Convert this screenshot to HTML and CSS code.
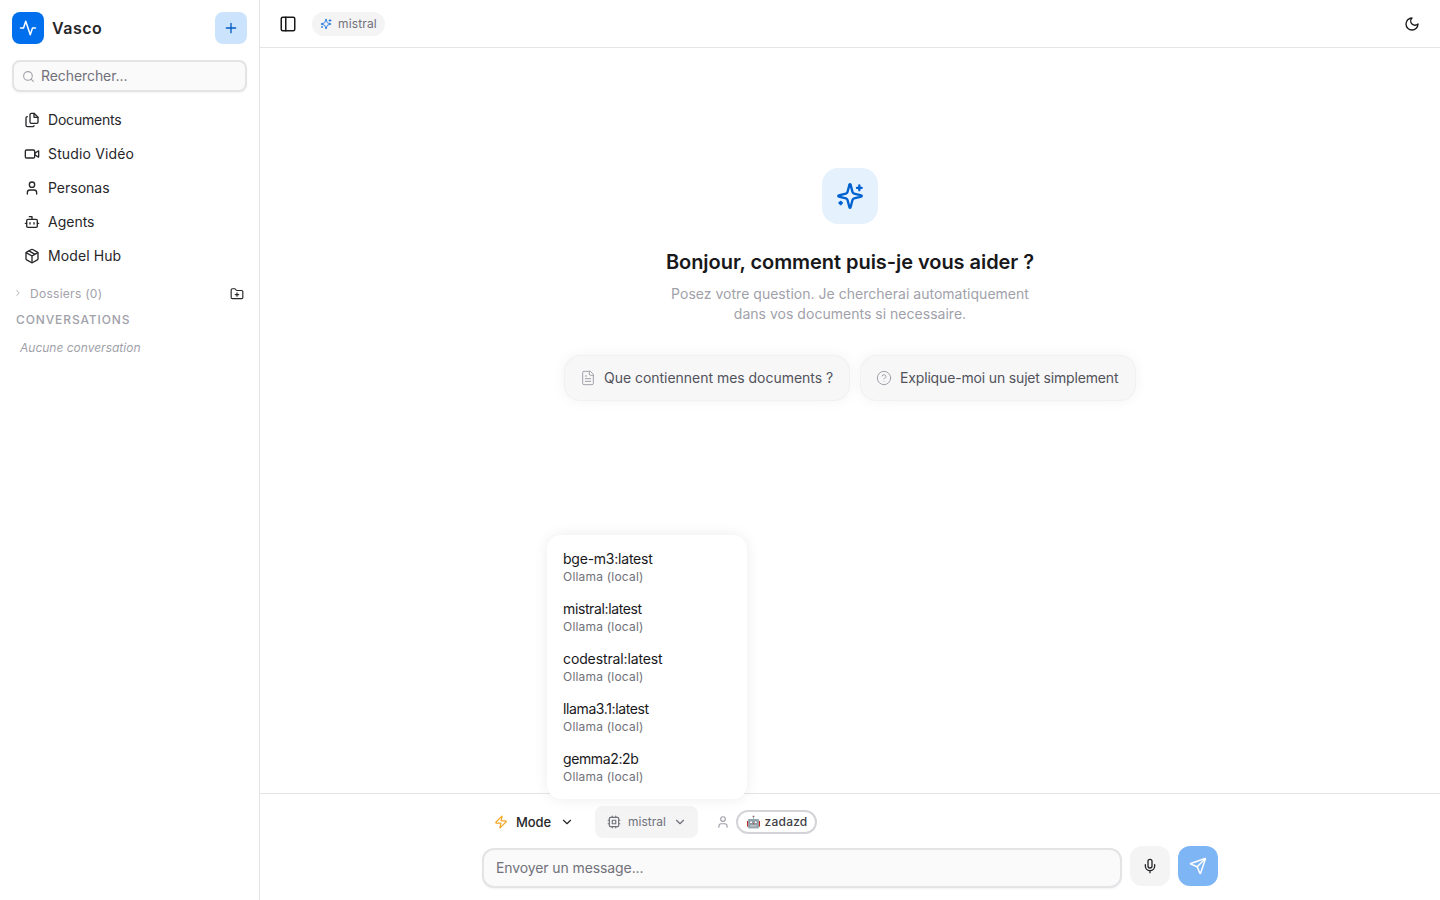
FILE: index.html
```html
<!DOCTYPE html>
<html lang="fr">
<head>
<meta charset="utf-8">
<title>Vasco</title>
<link rel="stylesheet" href="styles.css">
</head>
<body>
<div class="app">
  <aside class="sidebar">
    <div class="brand-row">
      <div class="brand">
        <span class="logo"><svg class="i18" viewBox="0 0 24 24"><path d="M22 12h-4l-3 9L9 3l-3 9H2"/></svg></span>
        <span class="brand-name">Vasco</span>
      </div>
      <button class="new-btn"><svg class="i16" viewBox="0 0 24 24"><path d="M5 12h14M12 5v14"/></svg></button>
    </div>
    <div class="search">
      <svg class="i14" viewBox="0 0 24 24"><circle cx="11" cy="11" r="8"/><path d="m21 21-4.3-4.3"/></svg>
      <span>Rechercher...</span>
    </div>
    <nav class="nav">
      <a class="nav-item"><svg class="i16" viewBox="0 0 24 24"><path d="M15 2h-4a2 2 0 0 0-2 2v11a2 2 0 0 0 2 2h8a2 2 0 0 0 2-2V8Z"/><path d="M15 2v6h6"/><path d="M5 7a2 2 0 0 0-2 2v11a2 2 0 0 0 2 2h8a2 2 0 0 0 2-1.5"/></svg><span class="tight">Documents</span></a>
      <a class="nav-item"><svg class="i16" viewBox="0 0 24 24"><path d="m16 13 5.2 3.5a.5.5 0 0 0 .8-.4V7.9a.5.5 0 0 0-.8-.4L16 11"/><rect x="2" y="6" width="14" height="12" rx="2"/></svg><span class="wide">Studio Vidéo</span></a>
      <a class="nav-item"><svg class="i16" viewBox="0 0 24 24"><path d="M19 21v-2a4 4 0 0 0-4-4H9a4 4 0 0 0-4 4v2"/><circle cx="12" cy="7" r="4"/></svg><span>Personas</span></a>
      <a class="nav-item"><svg class="i16" viewBox="0 0 24 24"><path d="M12 8V4H8"/><rect x="4" y="8" width="16" height="12" rx="2"/><path d="M2 14h2M20 14h2M15 13v2M9 13v2"/></svg><span>Agents</span></a>
      <a class="nav-item"><svg class="i16" viewBox="0 0 24 24"><path d="M21 8a2 2 0 0 0-1-1.7l-7-4a2 2 0 0 0-2 0l-7 4A2 2 0 0 0 3 8v8a2 2 0 0 0 1 1.7l7 4a2 2 0 0 0 2 0l7-4a2 2 0 0 0 1-1.7Z"/><path d="m3.3 7 8.7 5 8.7-5M12 22V12M7.5 4.3l9 5.2"/></svg><span class="wide-sm">Model Hub</span></a>
    </nav>
    <div class="folders">
      <div class="folders-left">
        <svg class="i10" viewBox="0 0 24 24"><path d="m9 18 6-6-6-6"/></svg>
        <span>Dossiers (0)</span>
      </div>
      <svg class="i14 folder-plus" viewBox="0 0 24 24"><path d="M20 20a2 2 0 0 0 2-2V8a2 2 0 0 0-2-2h-7.9a2 2 0 0 1-1.7-.9l-.8-1.2A2 2 0 0 0 7.9 3H4a2 2 0 0 0-2 2v13a2 2 0 0 0 2 2Z"/><path d="M12 10v6M9 13h6"/></svg>
    </div>
    <div class="section-title">CONVERSATIONS</div>
    <div class="empty-conv">Aucune conversation</div>
  </aside>

  <main class="main">
    <header class="topbar">
      <div class="topbar-left">
        <button class="icon-btn"><svg class="i18" viewBox="0 0 24 24"><rect x="3" y="3" width="18" height="18" rx="2"/><path d="M9 3v18"/></svg></button>
        <span class="model-chip">
          <svg class="i12 chip-icon" viewBox="0 0 24 24"><path d="M9.900 15.500A2 2 0 0 0 8.500 14.100l-6.100-1.600a.5.5 0 0 1 0-1l6.100-1.600a2 2 0 0 0 1.400-1.400l1.600-6.100a.5.5 0 0 1 1 0l1.600 6.100a2 2 0 0 0 1.400 1.400l6.100 1.600a.5.5 0 0 1 0 1l-6.100 1.600a2 2 0 0 0-1.400 1.400l-1.600 6.100a.5.5 0 0 1-1 0Z"/><path d="M20 3v4M22 5h-4M4 17v2M5 18H3"/></svg>
          <span>mistral</span>
        </span>
      </div>
      <button class="icon-btn"><svg class="i16" viewBox="0 0 24 24"><path d="M12 3a6 6 0 0 0 9 9 9 9 0 1 1-9-9Z"/></svg></button>
    </header>

    <section class="welcome">
      <div class="spark"><svg viewBox="0 0 24 24"><path d="M9.900 15.500A2 2 0 0 0 8.500 14.100l-6.100-1.600a.5.5 0 0 1 0-1l6.100-1.600a2 2 0 0 0 1.400-1.400l1.600-6.100a.5.5 0 0 1 1 0l1.600 6.100a2 2 0 0 0 1.400 1.400l6.100 1.600a.5.5 0 0 1 0 1l-6.100 1.600a2 2 0 0 0-1.400 1.400l-1.600 6.100a.5.5 0 0 1-1 0Z"/><path d="M20 3v4M22 5h-4M4 17v2M5 18H3"/></svg></div>
      <h1 class="title">Bonjour, comment puis-je vous aider ?</h1>
      <p class="subtitle">Posez votre question. Je chercherai automatiquement<br>dans vos documents si necessaire.</p>
      <div class="suggestions">
        <button class="suggestion"><svg class="i16" viewBox="0 0 24 24"><path d="M15 2H6a2 2 0 0 0-2 2v16a2 2 0 0 0 2 2h12a2 2 0 0 0 2-2V7Z"/><path d="M14 2v4a2 2 0 0 0 2 2h4M10 9H8M16 13H8M16 17H8"/></svg><span class="tight-xs">Que contiennent mes documents ?</span></button>
        <button class="suggestion"><svg class="i16" viewBox="0 0 24 24"><circle cx="12" cy="12" r="10"/><path d="M9.100 9a3 3 0 0 1 5.800 1c0 2-3 3-3 3M12 17h.01"/></svg><span class="tighter">Explique-moi un sujet simplement</span></button>
      </div>
    </section>

    <footer class="composer">
      <div class="dropdown">
        <div class="dd-item"><div class="dd-name">bge-m3:latest</div><div class="dd-sub">Ollama (local)</div></div>
        <div class="dd-item"><div class="dd-name dd-tight">mistral:latest</div><div class="dd-sub">Ollama (local)</div></div>
        <div class="dd-item"><div class="dd-name dd-loose">codestral:latest</div><div class="dd-sub">Ollama (local)</div></div>
        <div class="dd-item"><div class="dd-name dd-tight">llama3.1:latest</div><div class="dd-sub">Ollama (local)</div></div>
        <div class="dd-item"><div class="dd-name dd-tight">gemma2:2b</div><div class="dd-sub">Ollama (local)</div></div>
      </div>
      <div class="controls">
        <button class="mode"><svg class="i14 zap" viewBox="0 0 24 24"><path d="M4 14a1 1 0 0 1-.8-1.600l9.900-10.200a.5.5 0 0 1 .9.500l-1.900 6A1 1 0 0 0 13 10h7a1 1 0 0 1 .8 1.600l-9.900 10.200a.5.5 0 0 1-.9-.500l1.900-6A1 1 0 0 0 11 14Z"/></svg><span>Mode</span><svg class="i14 chev" viewBox="0 0 24 24"><path d="m6 9 6 6 6-6"/></svg></button>
        <button class="model-btn"><svg class="i14" viewBox="0 0 24 24"><rect x="4" y="4" width="16" height="16" rx="2"/><rect x="9" y="9" width="6" height="6" rx="1"/><path d="M15 2v2M15 20v2M2 15h2M2 9h2M20 15h2M20 9h2M9 2v2M9 20v2"/></svg><span>mistral</span><svg class="i14" viewBox="0 0 24 24"><path d="m6 9 6 6 6-6"/></svg></button>
        <div class="persona">
          <svg class="i14" viewBox="0 0 24 24"><path d="M19 21v-2a4 4 0 0 0-4-4H9a4 4 0 0 0-4 4v2"/><circle cx="12" cy="7" r="4"/></svg>
          <span class="persona-pill"><span>🤖 zadazd</span></span>
        </div>
      </div>
      <div class="input-row">
        <div class="message-input"><span>Envoyer un message...</span></div>
        <button class="mic"><svg class="i16" viewBox="0 0 24 24"><path d="M12 2a3 3 0 0 0-3 3v7a3 3 0 0 0 6 0V5a3 3 0 0 0-3-3Z"/><path d="M19 10v2a7 7 0 0 1-14 0v-2M12 19v3"/></svg></button>
        <button class="send"><svg class="i18" viewBox="0 0 24 24"><path d="M14.500 21.700a.5.5 0 0 0 .9 0l6.500-19a.5.5 0 0 0-.6-.6l-19 6.500a.5.5 0 0 0 0 .9l7.900 3.200a2 2 0 0 1 1.100 1.100Z"/><path d="m21.900 2.100-10.900 10.900"/></svg></button>
      </div>
    </footer>
  </main>
</div>
</body>
</html>
```
FILE: styles.css
```css
* { box-sizing: border-box; }
html, body { margin: 0; height: 100%; }
body { font-family: Inter, "Liberation Sans", sans-serif; color: #18181b; background: #fff; overflow: hidden; }
button { font-family: inherit; border: 0; background: none; padding: 0; margin: 0; cursor: pointer; }
svg { fill: none; stroke: currentColor; stroke-width: 2; stroke-linecap: round; stroke-linejoin: round; flex: none; display: block; }
.i10 { width: 10px; height: 10px; }
.i12 { width: 12px; height: 12px; }
.i14 { width: 14px; height: 14px; }
.i16 { width: 16px; height: 16px; }
.i18 { width: 18px; height: 18px; }

.app { display: flex; width: 1440px; height: 900px; }

.sidebar { width: 260px; flex: none; border-right: 1px solid #e4e4e7; padding: 12px 12px 0; display: flex; flex-direction: column; }
.brand-row { display: flex; justify-content: space-between; align-items: center; height: 32px; }
.brand { display: flex; align-items: center; gap: 8px; }
.logo { width: 32px; height: 32px; border-radius: 8px; background: #006fee; color: #fff; display: flex; align-items: center; justify-content: center; }
.brand-name { font-size: 16px; font-weight: 600; letter-spacing: 0.5px; color: #27272a; }
.new-btn { width: 32px; height: 32px; border-radius: 8px; background: #cce3fd; color: #005bc4; display: flex; align-items: center; justify-content: center; }
.search { margin-top: 16px; height: 32px; border: 2px solid #e4e4e7; border-radius: 8px; background: #fafafa; box-shadow: 0 1px 2px rgba(0, 0, 0, 0.05); display: flex; align-items: center; gap: 6px; padding: 0 8px; font-size: 14px; letter-spacing: -0.08px; color: #71717a; }
.search svg { color: #a1a1aa; width: 13px; height: 13px; }
.search span { padding-bottom: 2px; }
.nav { margin-top: 11px; display: flex; flex-direction: column; }
.nav-item { height: 34px; display: flex; align-items: center; gap: 8px; padding-left: 12px; font-size: 14px; color: #27272a; }
.nav-item span { padding-bottom: 2px; }
.tight { letter-spacing: -0.2px; }
.wide { letter-spacing: 0.15px; }
.wide-sm { letter-spacing: 0.1px; }
.folders { margin-top: 12px; height: 18px; display: flex; align-items: center; justify-content: space-between; padding: 0 0 0 1px; }
.folders-left { display: flex; align-items: center; gap: 7px; font-size: 12px; color: #a1a1aa; letter-spacing: 0.28px; padding-bottom: 2px; }
.folders-left svg { color: #a1a1aa; }
.folder-plus { color: #27272a; margin-right: 3px; }
.section-title { margin-top: 9px; padding-left: 4px; font-size: 12px; font-weight: 500; line-height: 16px; letter-spacing: 0.88px; color: #a1a1aa; }
.empty-conv { margin-top: 12px; padding-left: 8px; font-size: 12px; line-height: 16px; font-style: italic; color: #a1a1aa; }

.main { flex: 1; min-width: 0; display: flex; flex-direction: column; }
.topbar { height: 48px; flex: none; border-bottom: 1px solid #e4e4e7; display: flex; align-items: center; justify-content: space-between; padding: 0 19px 0 19px; }
.topbar-left { display: flex; align-items: center; gap: 15px; }
.icon-btn { width: 18px; height: 18px; color: #18181b; display: flex; align-items: center; justify-content: center; }
.model-chip { height: 24px; padding: 0 8px; border-radius: 12px; background: #f4f4f5; display: flex; align-items: center; gap: 6px; font-size: 12px; letter-spacing: 0.14px; color: #71717a; }
.chip-icon { color: #2a7fe0; }

.welcome { flex: 1; min-height: 0; padding-top: 120px; display: flex; flex-direction: column; align-items: center; }
.spark { width: 56px; height: 56px; border-radius: 16px; background: #e6f1fe; color: #0062d1; display: flex; align-items: center; justify-content: center; }
.spark svg { width: 28px; height: 28px; }
.title { margin: 24px 0 0; font-size: 20px; line-height: 28px; font-weight: 600; letter-spacing: -0.05px; color: #18181b; }
.subtitle { margin: 8px 0 0; font-size: 14px; line-height: 20px; letter-spacing: 0.02px; color: #a1a1aa; text-align: center; }
.suggestions { margin-top: 31px; display: flex; gap: 10px; }
.suggestion { height: 46px; width: 286px; padding: 0 15px; border-radius: 16px; border: 1px solid #f1f1f2; background: #f7f7f8; box-shadow: 0 0 14px rgba(0, 0, 0, 0.05); display: flex; align-items: center; gap: 8px; font-size: 14px; color: #52525b; white-space: nowrap; }
.suggestion + .suggestion { width: 276px; }
.suggestion svg { color: #a1a1aa; stroke-width: 1.500; }
.suggestion span { padding-bottom: 2px; }
.tight-xs { letter-spacing: -0.03px; }
.tighter { letter-spacing: -0.16px; }

.composer { position: relative; height: 107px; flex: none; border-top: 1px solid #e4e4e7; padding: 12px 222px 0; display: flex; flex-direction: column; }
.dropdown { position: absolute; left: 287px; bottom: 101px; width: 200px; height: 264px; padding: 5px 0 9px; background: #fff; border-radius: 14px; box-shadow: 0 0 14px rgba(0, 0, 0, 0.08); z-index: 5; display: flex; flex-direction: column; }
.dd-item { height: 50px; flex: none; padding: 9px 16px 0; }
.dd-name { font-size: 14px; line-height: 20px; letter-spacing: -0.23px; color: #18181b; }
.dd-tight { letter-spacing: -0.38px; }
.dd-loose { letter-spacing: -0.12px; }
.dd-sub { font-size: 12px; line-height: 16px; letter-spacing: 0.2px; color: #71717a; }
.controls { height: 32px; display: flex; align-items: center; }
.mode { height: 32px; width: 113px; padding-left: 12px; display: flex; align-items: center; gap: 8px; font-size: 13px; font-weight: 500; color: #27272a; }
.mode span, .model-btn span { padding-bottom: 1px; }
.mode span { letter-spacing: -0.1px; }
.zap { color: #f5a524; }
.chev { margin-left: 1px; }
.model-btn { height: 32px; width: 103px; border-radius: 8px; background: #f4f4f5; display: flex; align-items: center; padding-left: 12px; gap: 7px; font-size: 12px; color: #71717a; }
.persona { margin-left: 18px; display: flex; align-items: center; gap: 6px; }
.persona > svg { color: #a1a1aa; }
.persona-pill { height: 24px; width: 81px; border: 2px solid #d4d4d8; border-radius: 12px; padding: 0 8px; display: flex; align-items: center; font-size: 12px; font-weight: 500; letter-spacing: 0.2px; color: #3f3f46; white-space: nowrap; }
.persona-pill span { padding-bottom: 2px; }
.input-row { margin-top: 8px; display: flex; align-items: flex-start; gap: 8px; }
.message-input { width: 640px; height: 40px; margin-top: 2px; border: 2px solid #e4e4e7; border-radius: 12px; background: #fafafa; box-shadow: 0 1px 2px rgba(0, 0, 0, 0.05); display: flex; align-items: center; padding: 0 12px; font-size: 14px; letter-spacing: -0.1px; color: #71717a; }
.message-input span { padding-bottom: 2px; }
.mic { width: 40px; height: 40px; border-radius: 12px; background: #f4f4f5; color: #27272a; display: flex; align-items: center; justify-content: center; }
.send { width: 40px; height: 40px; border-radius: 12px; background: #7eb5f5; color: #fff; display: flex; align-items: center; justify-content: center; }
```
